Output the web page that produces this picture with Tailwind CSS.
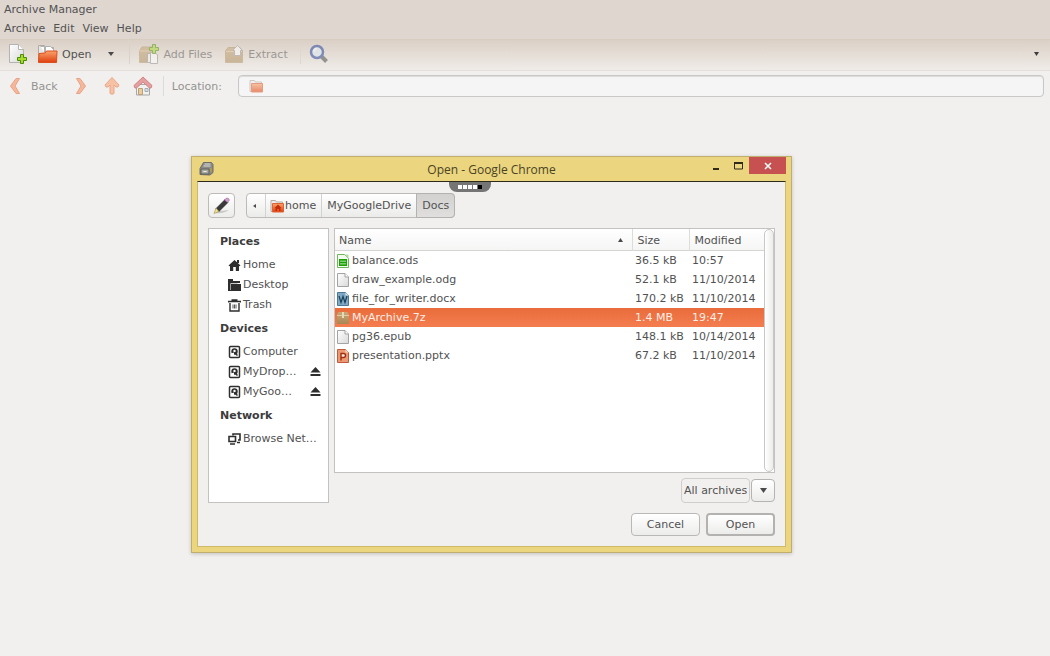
<!DOCTYPE html>
<html lang="en">
<head>
    <meta charset="UTF-8" />
    <meta name="viewport" content="width=device-width, initial-scale=1.0" />
    <title>Archive Manager</title>
    <script src="https://cdn.jsdelivr.net/npm/@tailwindcss/browser@4"></script>
</head>
<body class="min-h-screen bg-[#f1f0ee] font-['DejaVu_Sans',sans-serif] text-[11px] leading-[19px] text-[#525252]">

    <!-- Shared icons -->
    <svg class="absolute size-0" aria-hidden="true">
        <defs>
            <linearGradient id="orange" x1="0" y1="0" x2="0" y2="1">
                <stop offset="0" stop-color="#f9a26c" />
                <stop offset="1" stop-color="#e0400f" />
            </linearGradient>
            <linearGradient id="paper" x1="0" y1="0" x2="1" y2="1">
                <stop offset="0" stop-color="#ffffff" />
                <stop offset="1" stop-color="#d9d9d9" />
            </linearGradient>
            <linearGradient id="box" x1="0" y1="0" x2="0" y2="1">
                <stop offset="0" stop-color="#c9a878" />
                <stop offset="1" stop-color="#a98654" />
            </linearGradient>
            <symbol id="plus" viewBox="0 0 10 10">
                <path d="M3.5 .5h3v3h3v3h-3v3h-3v-3h-3v-3h3z" fill="#a5dc2c" stroke="#4c8a08" />
            </symbol>
            <symbol id="page" viewBox="0 0 12 14">
                <path d="M.5 .5h7.500l3.500 3.500v9.500h-11z" fill="url(#paper)" stroke="#a3a3a3" />
                <path d="M8 .5v3.500h3.500" fill="#fff" stroke="#a3a3a3" />
            </symbol>
            <symbol id="folder" viewBox="0 0 14 14">
                <path d="M1 12.500v-11h4.500l1 1.500h6v9.500z" fill="#ececec" stroke="#b5aaa4" />
                <path d="M2.500 4.500h11v8.500h-11z" fill="url(#orange)" stroke="#dd6234" />
            </symbol>
            <symbol id="disk" viewBox="0 0 13 14">
                <rect x="1.500" y="1.500" width="10" height="11" rx="1" fill="none" stroke="#2e2e2e" stroke-width="1.500" />
                <circle cx="6.500" cy="6.500" r="3.200" fill="#2e2e2e" />
                <circle cx="6.500" cy="6" r="1.200" fill="#fff" />
                <path d="M3 8.500l3-1v3h-3z" fill="#fff" />
                <path d="M6.500 7.500l3 3" stroke="#2e2e2e" stroke-width="1.500" />
            </symbol>
            <symbol id="eject" viewBox="0 0 11 10">
                <path d="M5.500 0l5 5.500h-10zM.5 7h10v2h-10z" fill="#2e2e2e" />
            </symbol>
        </defs>
    </svg>

    <header class="bg-[#dfd6d0] pb-px">
        <h1 class="px-1">Archive Manager</h1>
        <nav class="flex gap-2 px-1">
            <a href="#">Archive</a>
            <a href="#">Edit</a>
            <a href="#">View</a>
            <a href="#">Help</a>
        </nav>
    </header>

    <div class="flex h-8 items-center border-y border-t-[#d9cdc2] border-b-[#e5dfd9] bg-linear-to-b from-[#dbd0c6] to-[#efece8] pb-[2px] pl-2">
        <button aria-label="New archive">
            <svg width="20" height="22" viewBox="0 0 20 22">
                <path d="M1.500 1.500h9l5 5v13h-14z" fill="url(#paper)" stroke="#b3b3b3" />
                <path d="M10.500 1.500v5h5" fill="#fff" stroke="#b3b3b3" />
                <use href="#plus" x="9" y="11" width="10" height="10" />
            </svg>
        </button>
        <button class="ml-2 flex items-center gap-1">
            <svg width="22" height="20" viewBox="0 0 22 20">
                <path d="M2.500 17.500v-16h6l1 2h8v14z" fill="#e9e7e5" stroke="#b0aaa6" />
                <path d="M4.500 2.500h4v6M9.500 2.500h5l3 3v5h-8z" fill="#fff" stroke="#b0b0b0" />
                <path d="M3 9.500l6-.5 1.500-2h10.500l-.5 11.500h-18z" fill="url(#orange)" stroke="#dc4e1c" />
            </svg>
            Open
        </button>
        <button class="ml-2.5 w-5" aria-label="Recent archives">
            <svg class="mx-auto" width="6" height="4" viewBox="0 0 6 4"><path d="M0 0h6l-3 4z" fill="#4a4a4a" /></svg>
        </button>
        <span class="ml-2 h-5 w-px bg-[#d9d2ca]"></span>
        <button class="ml-2 flex items-center gap-1 opacity-50" disabled>
            <svg width="21" height="22" viewBox="0 0 21 22">
                <path d="M1.500 8l2.500-4h10l3 4v11.500h-15.500z" fill="url(#box)" stroke="#b39566" />
                <path d="M1.500 8h15" stroke="#dcc49c" />
                <path d="M9.500 10.500h6v9h-6z" fill="#f4f4f4" stroke="#8f8f8f" />
                <path d="M12.500 9.500h4.500l2.500 2.500v8.500h-7z" fill="#fff" stroke="#8f8f8f" />
                <use href="#plus" x="11" y="1" width="10" height="10" />
            </svg>
            Add Files
        </button>
        <button class="ml-3 flex items-center gap-1 opacity-50" disabled>
            <svg width="20" height="20" viewBox="0 0 20 20">
                <path d="M1.500 7l2.500-3.500h12l2.500 3.500v11.500h-17z" fill="url(#box)" stroke="#b39566" />
                <path d="M2 7.500h16" stroke="#dcc49c" />
                <path d="M13.500 1.500l5 5h-2v5h-6v-5h-2z" fill="#fff" stroke="#999" />
            </svg>
            Extract
        </button>
        <span class="ml-3 h-5 w-px bg-[#ddd7d0]"></span>
        <button class="ml-2 opacity-60" aria-label="Find" disabled>
            <svg width="20" height="20" viewBox="0 0 20 20">
                <path d="M12 12l5.500 5.500" stroke="#5e5e5e" stroke-width="4" />
                <circle cx="8" cy="8" r="6" fill="#dfe9f2" stroke="#3c55a4" stroke-width="2.500" />
                <path d="M5 7.500a3 3 0 0 1 3-3" fill="none" stroke="#fff" stroke-width="1.500" />
            </svg>
        </button>
        <button class="ml-auto w-7" aria-label="More tools">
            <svg class="mx-auto" width="5" height="4" viewBox="0 0 5 4"><path d="M0 0h5l-2.500 4z" fill="#3c3c3c" /></svg>
        </button>
    </div>

    <div class="flex items-center py-1 pl-2 pr-[6px] text-[#949392]">
        <button class="flex items-center gap-2" disabled>
            <svg width="15" height="18" viewBox="0 0 15 18">
                <path d="M8 1.500h3.500l-4.500 7.500 4.500 7.500h-3.500l-5.500-7.500z" fill="#f5b89c" stroke="#e8a284" stroke-linejoin="round" />
            </svg>
            Back
        </button>
        <button class="ml-4" aria-label="Forward" disabled>
            <svg width="15" height="18" viewBox="0 0 15 18">
                <path d="M6 1.500h-3.500l4.500 7.500-4.500 7.500h3.500l5.500-7.500z" fill="#f5b89c" stroke="#e8a284" stroke-linejoin="round" />
            </svg>
        </button>
        <button class="ml-3.5" aria-label="Up" disabled>
            <svg width="18" height="20" viewBox="0 0 18 20">
                <path d="M9 1.500l7 7.500-1 2h-2l-2-2v8.500q-2 1.500-4 0v-8.500l-2 2h-2l-1-2z" fill="#f7c1a6" stroke="#e8a88a" stroke-linejoin="round" />
            </svg>
        </button>
        <button class="ml-3 opacity-60" aria-label="Home" disabled>
            <svg width="20" height="20" viewBox="0 0 20 20">
                <path d="M3.500 8.500h13v10.500h-13z" fill="#f2f2f2" stroke="#777" />
                <path d="M5.500 12.500h4v6h-4z" fill="#e3b566" stroke="#9a6a2a" />
                <path d="M12 12.500h3v3h-3z" fill="#c9dbea" stroke="#6b7f96" />
                <path d="M10 1l9 8.500-1 2.500h-1.500l-6.500-6-6.500 6h-1.500l-1-2.500z" fill="#e0686a" stroke="#b53e42" stroke-linejoin="round" />
            </svg>
        </button>
        <span class="ml-2.5 h-5 w-px bg-[#dddbd8]"></span>
        <label for="location" class="ml-2">Location:</label>
        <div class="ml-4 flex h-[22px] flex-1 items-center gap-2 rounded border border-[#c9c8c6] bg-[#f5f5f5] pl-2.5 shadow-[inset_0_1px_1px_#dcdbda]">
            <svg class="opacity-60" width="14" height="14"><use href="#folder" /></svg>
            <input id="location" type="text" class="h-full flex-1 outline-none" />
        </div>
    </div>

    <!-- Open dialog -->
    <section class="absolute left-[191px] top-[156px] flex w-[601px] flex-col border border-[#bfae6c] bg-[#ebd57e] px-[5px] pb-[5px] shadow-[0_1px_4px_#00000033]" role="dialog" aria-labelledby="dialog-title">
        <div class="grid h-6 grid-cols-[1fr_auto_1fr]">
            <svg class="ml-[2px] mt-1" width="15" height="15" viewBox="0 0 15 15" aria-hidden="true">
                <path d="M1 13.500v-6l3.500-6h8l1.500 2v8l-3 2.500z" fill="#8a8a86" stroke="#6d6c66" />
                <path d="M5.500 3h6M4.500 5h7" stroke="#dcdcd8" />
                <path d="M2 8h8v5h-8z" fill="#a9a9a4" stroke="#5e5e5a" />
                <path d="M4.500 10.500h3" stroke="#f0eee0" />
                <path d="M12 7v4" stroke="#c8a83c" />
            </svg>
            <h2 id="dialog-title" class="pt-[3px] font-['Open_Sans',sans-serif] text-[12px] text-[#4a4326]">Open - Google Chrome</h2>
            <div class="flex items-start justify-end">
                <button class="h-[17px] w-[22px]" aria-label="Minimize">
                    <svg class="mx-auto" width="8" height="12"><path d="M1 8h6v2h-6z" fill="#2f2b1a" /></svg>
                </button>
                <button class="h-[17px] w-[22px]" aria-label="Maximize">
                    <svg class="mx-auto" width="9" height="8"><path d="M.5 1.500h8v5.500h-8z" fill="none" stroke="#2f2b1a" /><path d="M0 1h9" stroke="#2f2b1a" stroke-width="2" /></svg>
                </button>
                <button class="h-[17px] w-[37px] bg-[#c75050]" aria-label="Close">
                    <svg class="mx-auto" width="8" height="8"><path d="M1 1l6 6M7 1l-6 6" stroke="#fff" stroke-width="1.500" /></svg>
                </button>
            </div>
        </div>

        <div class="relative border border-[#cdb966] border-t-[#2d2a1c] bg-[#f1f0ee] px-[10px] pb-[10px] pt-[11px]">
            <div class="absolute left-[251px] top-0 flex h-[10px] w-[42px] items-center justify-center gap-px rounded-b-lg bg-[#757575]">
                <i class="size-1 bg-white"></i>
                <i class="size-1 bg-white"></i>
                <i class="size-1 bg-white"></i>
                <i class="size-1 bg-white"></i>
                <i class="size-1 bg-black"></i>
            </div>

            <div class="flex gap-[11px] leading-[17px]">
                <button class="flex h-[25px] w-[27px] items-center justify-center rounded border border-[#bcbbb9] bg-linear-to-b from-white to-[#ececeb]" aria-label="Type a file name">
                    <svg width="19" height="18" viewBox="0 0 19 18">
                        <path d="M3 16q8 1 14-3-7 1-12 1z" fill="#c9c9c9" />
                        <path d="M4 11.500l9-9 3 3-9 9z" fill="#3a3a3a" stroke="#222" stroke-width=".5" />
                        <path d="M12.500 3l2-2q2-.5 3 2l-2 2.500z" fill="#d59ad0" stroke="#8c5c88" stroke-width=".5" />
                        <path d="M4 11l3 3.500-5 2z" fill="#f0e08a" stroke="#8c8146" stroke-width=".5" />
                    </svg>
                </button>
                <div class="flex h-[25px] items-stretch rounded border border-[#bcbbb9] bg-linear-to-b from-white to-[#ebebea]">
                    <button class="flex w-[18px] items-center justify-center pr-1" aria-label="Scroll path">
                        <svg width="3" height="4"><path d="M3 0v4l-3-2z" fill="#4a4a4a" /></svg>
                    </button>
                    <button class="flex items-center gap-px border-l border-[#d3d2d0] pl-1 pr-[5px]">
                        <svg width="14" height="14" viewBox="0 0 14 14">
                            <use href="#folder" />
                            <path d="M8 5.500l3.500 3.500h-1v3h-1.500v-2h-2v2h-1.500v-3h-1z" fill="#c22c0a" />
                        </svg>
                        home
                    </button>
                    <button class="border-l border-[#d3d2d0] px-[5px]">MyGoogleDrive</button>
                    <button class="-my-px -mr-px rounded-r border border-[#b3b2b0] bg-linear-to-b from-[#d2d1d0] to-[#e0dfde] px-[5px]">Docs</button>
                </div>
            </div>

            <div class="mt-[10px] flex gap-[5px]">
                <aside class="h-[275px] w-[121px] shrink-0 border border-[#c3c2c0] bg-white pl-[11px]">
                    <h3 class="font-bold leading-[26px] text-[#3c3c3c]">Places</h3>
                    <ul class="pl-2 leading-[20px]">
                        <li><a href="#" class="flex items-center gap-[2px]">
                            <svg width="13" height="12" viewBox="0 0 13 12"><path d="M6.500 1l6 5.500-1 .8-.5-.3v5h-3.200v-4h-2.600v4h-3.200v-5l-.5 .3-1-.8z" fill="#2e2e2e" /><path d="M9 1h2v3h-2z" fill="#2e2e2e" /></svg>
                            Home
                        </a></li>
                        <li><a href="#" class="flex items-center gap-[2px]">
                            <svg width="13" height="12" viewBox="0 0 13 12"><path d="M0 0h5v2h7v2h-9v8h-3z" fill="#2e2e2e" /><path d="M3 5h10v7h-10z" fill="#2e2e2e" /><path d="M2.500 11v-6.500h7" fill="none" stroke="#bbb" stroke-width=".8" /></svg>
                            Desktop
                        </a></li>
                        <li><a href="#" class="flex items-center gap-[2px]">
                            <svg width="13" height="13" viewBox="0 0 13 13"><path d="M3.500 1h6M.5 3.500v-1h12v1M2 4v8h9v-8" fill="none" stroke="#2e2e2e" stroke-width="1.400" /><path d="M5 5.500v4M6.500 5.500v4M8 5.500v4" stroke="#2e2e2e" stroke-width=".8" /></svg>
                            Trash
                        </a></li>
                    </ul>
                    <h3 class="font-bold leading-[27px] text-[#3c3c3c]">Devices</h3>
                    <ul class="pl-2 pr-[7px] leading-[20px]">
                        <li><a href="#" class="flex items-center gap-[2px]"><svg width="13" height="14"><use href="#disk" /></svg>Computer</a></li>
                        <li class="flex items-center justify-between">
                            <a href="#" class="flex items-center gap-[2px]"><svg width="13" height="14"><use href="#disk" /></svg>MyDrop…</a>
                            <button aria-label="Eject MyDrop"><svg width="11" height="10"><use href="#eject" /></svg></button>
                        </li>
                        <li class="flex items-center justify-between">
                            <a href="#" class="flex items-center gap-[2px]"><svg width="13" height="14"><use href="#disk" /></svg>MyGoo…</a>
                            <button aria-label="Eject MyGoo"><svg width="11" height="10"><use href="#eject" /></svg></button>
                        </li>
                    </ul>
                    <h3 class="font-bold leading-[27px] text-[#3c3c3c]">Network</h3>
                    <ul class="pl-2 leading-[20px]">
                        <li><a href="#" class="flex items-center gap-[2px] whitespace-nowrap">
                            <svg width="13" height="12" viewBox="0 0 13 12"><path d="M5 2.500v-1.500h7v6h-2" fill="none" stroke="#2e2e2e" stroke-width="1.600" /><path d="M1 3.500h6.500v5h-6.500z" fill="#fff" stroke="#2e2e2e" stroke-width="1.600" /><path d="M2 11h5M9 9.500h3" stroke="#2e2e2e" stroke-width="1.500" /></svg>
                            Browse Net…
                        </a></li>
                    </ul>
                </aside>

                <div class="min-w-0 flex-1">
                    <div class="flex h-[245px] items-stretch border border-[#c3c2c0] bg-white">
                        <div class="flex-1">
                            <table class="w-full table-fixed border-collapse whitespace-nowrap text-left">
                                <thead>
                                    <tr class="h-[22px] bg-linear-to-b from-white to-[#f5f5f4] shadow-[inset_0_-1px_0_#d6d5d4]">
                                        <th class="p-0 pl-1 font-normal">
                                            <div class="flex items-center justify-between pr-[9px]">
                                                Name
                                                <svg width="5" height="4"><path d="M0 4h5l-2.500-4z" fill="#4a4a4a" /></svg>
                                            </div>
                                        </th>
                                        <th class="w-[57px] border-l border-[#dddcdb] p-0 pl-[5px] font-normal">Size</th>
                                        <th class="w-[75px] border-l border-[#dddcdb] p-0 pl-[5px] font-normal">Modified</th>
                                    </tr>
                                </thead>
                                <tbody>
                                    <tr>
                                        <td class="p-0 pl-[2px]"><div class="flex items-center gap-[3px]">
                                            <svg width="12" height="14" viewBox="0 0 12 14"><path d="M.5 .5h7l4 4v9h-11z" fill="#f3fbef" stroke="#6fb55c" /><path d="M7.500 .5h4v4z" fill="#b5dd9e" /><path d="M2 5h8v7h-8z" fill="#18a303" /><path d="M4 6.500v4M6 6.500v4M8 6.500v4" stroke="#e3f6de" /><path d="M2 8.500h8" stroke="#18a303" /></svg>
                                            balance.ods
                                        </div></td>
                                        <td class="p-0 pl-[3px]">36.5 kB</td>
                                        <td class="p-0 pl-[3px]">10:57</td>
                                    </tr>
                                    <tr>
                                        <td class="p-0 pl-[2px]"><div class="flex items-center gap-[3px]">
                                            <svg width="12" height="14"><use href="#page" /></svg>
                                            draw_example.odg
                                        </div></td>
                                        <td class="p-0 pl-[3px]">52.1 kB</td>
                                        <td class="p-0 pl-[3px]">11/10/2014</td>
                                    </tr>
                                    <tr>
                                        <td class="p-0 pl-[2px]"><div class="flex items-center gap-[3px]">
                                            <svg width="12" height="14" viewBox="0 0 12 14"><path d="M.5 .5h8l3 3v10h-11z" fill="#7fa9c4" stroke="#4b7896" /><path d="M8.500 .5v3h3z" fill="#dce8f0" /><path d="M2 4l2 6.500 2-6 2 6 2-6.500" fill="none" stroke="#1d3f58" stroke-width="1.200" /></svg>
                                            file_for_writer.docx
                                        </div></td>
                                        <td class="p-0 pl-[3px]">170.2 kB</td>
                                        <td class="p-0 pl-[3px]">11/10/2014</td>
                                    </tr>
                                    <tr class="bg-linear-to-b from-[#e96c3b] to-[#f47d4f] text-[#fdeee6]" aria-selected="true">
                                        <td class="p-0 pl-[2px]"><div class="flex items-center gap-[3px]">
                                            <svg width="12" height="12" viewBox="0 0 12 12"><path d="M0 3l1.500-3h9l1.500 3v9h-12z" fill="url(#box)" /><path d="M0 3.500h12" stroke="#e0cba4" /><path d="M5 0h2v6h-2z" fill="#e6d8b8" /></svg>
                                            MyArchive.7z
                                        </div></td>
                                        <td class="p-0 pl-[3px]">1.4 MB</td>
                                        <td class="p-0 pl-[3px]">19:47</td>
                                    </tr>
                                    <tr>
                                        <td class="p-0 pl-[2px]"><div class="flex items-center gap-[3px]">
                                            <svg width="12" height="14"><use href="#page" /></svg>
                                            pg36.epub
                                        </div></td>
                                        <td class="p-0 pl-[3px]">148.1 kB</td>
                                        <td class="p-0 pl-[3px]">10/14/2014</td>
                                    </tr>
                                    <tr>
                                        <td class="p-0 pl-[2px]"><div class="flex items-center gap-[3px]">
                                            <svg width="12" height="14" viewBox="0 0 12 14"><path d="M.5 .5h8l3 3v10h-11z" fill="#eb9a74" stroke="#c4593a" /><path d="M8.500 .5v3h3z" fill="#f8dccf" /><path d="M4 11.500v-7h2.500q2 0 2 2t-2 2h-2.500" fill="#fbe9df" stroke="#a02f12" stroke-width="1.400" /></svg>
                                            presentation.pptx
                                        </div></td>
                                        <td class="p-0 pl-[3px]">67.2 kB</td>
                                        <td class="p-0 pl-[3px]">11/10/2014</td>
                                    </tr>
                                </tbody>
                            </table>
                        </div>
                        <div class="w-[10px] rounded-md border border-[#c9c8c6] bg-linear-to-r from-white to-[#ececeb]"></div>
                    </div>
                    <div class="mt-[5px] flex items-center justify-end gap-px">
                        <select class="h-[25px] w-[69px] appearance-none rounded-sm border border-[#cfcecc] px-[2px]" aria-label="File type">
                            <option>All archives</option>
                        </select>
                        <button class="flex h-[23px] w-6 items-center justify-center rounded border border-[#b5b4b2] bg-linear-to-b from-white to-[#ececeb]" aria-label="Show file types">
                            <svg width="7" height="5"><path d="M0 0h7l-3.500 5z" fill="#4a4a4a" /></svg>
                        </button>
                    </div>
                </div>
            </div>

            <div class="mt-[10px] flex justify-end gap-[6px]">
                <button class="h-[23px] w-[69px] rounded border border-[#b9b8b6] bg-linear-to-b from-white to-[#ececeb]">Cancel</button>
                <button class="h-[23px] w-[69px] rounded border-2 border-[#b3b2b0] bg-linear-to-b from-white to-[#ececeb]">Open</button>
            </div>
        </div>
    </section>

</body>
</html>
